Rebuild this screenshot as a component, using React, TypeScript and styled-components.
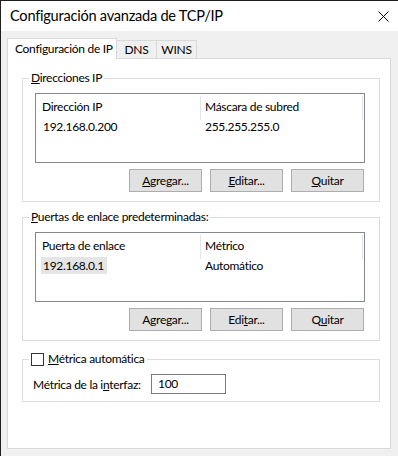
import React from 'react';
import styled, { createGlobalStyle } from 'styled-components';

const GlobalStyle = createGlobalStyle`
    body {
        margin: 0;
        font-family: "Lato", "Liberation Sans", sans-serif;
        color: #000;
    }
    * {
        box-sizing: border-box;
    }
`;

type Column = { title: string, width: number };
type ListData = { columns: Column[], rows: string[][], selected?: boolean };

const ipList: ListData = {
    columns: [
        { title: 'Dirección IP', width: 165 },
        { title: 'Máscara de subred', width: 162 },
    ],
    rows: [['192.168.0.200', '255.255.255.0']],
};

const gatewayList: ListData = {
    columns: [
        { title: 'Puerta de enlace', width: 165 },
        { title: 'Métrico', width: 162 },
    ],
    rows: [['192.168.0.1', 'Automático']],
    selected: true,
};

const ListView = ({ data }: { data: ListData }) => (
    <ListBox>
        <HeaderRow>
            {data.columns.map((col, i) => (
                <HeaderCell key={col.title} $width={col.width} $first={i === 0}>
                    {col.title}
                </HeaderCell>
            ))}
        </HeaderRow>
        {data.rows.map((row) => (
            <Row key={row[0]}>
                {row.map((cell, i) => (
                    <Cell key={cell} $width={data.columns[i].width} $first={i === 0}>
                        {i === 0 ? (
                            <CellText $selected={!!data.selected}>{cell}</CellText>
                        ) : cell}
                    </Cell>
                ))}
            </Row>
        ))}
    </ListBox>
);

const App = () => {
    return (
        <>
            <GlobalStyle />
            <Window>
                <TitleBar>
                    <Title>Configuración avanzada de TCP/IP</Title>
                    <CloseIcon width="11" height="11" viewBox="0 0 11 11">
                        <path d="M0.5 0.5 L10.5 10.5 M10.5 0.5 L0.5 10.5" stroke="#000" strokeWidth="1" fill="none" />
                    </CloseIcon>
                </TitleBar>
                <Body>
                    <TabRow>
                        <Tab $active>Configuración de IP</Tab>
                        <Tab>DNS</Tab>
                        <Tab>WINS</Tab>
                    </TabRow>
                    <Panel>
                        <Group $top={0}>
                            <Legend><u>D</u>irecciones IP</Legend>
                            <GroupContent>
                                <ListView data={ipList} />
                                <ButtonRow>
                                    <Button><u>A</u>gregar...</Button>
                                    <Button><u>E</u>ditar...</Button>
                                    <Button><u>Q</u>uitar</Button>
                                </ButtonRow>
                            </GroupContent>
                        </Group>
                        <Group $top={7}>
                            <Legend><u>P</u>uertas de enlace predeterminadas:</Legend>
                            <GroupContent>
                                <ListView data={gatewayList} />
                                <ButtonRow>
                                    <Button>A<u>g</u>regar...</Button>
                                    <Button>Edi<u>t</u>ar...</Button>
                                    <Button>Q<u>u</u>itar</Button>
                                </ButtonRow>
                            </GroupContent>
                        </Group>
                        <Group $top={10}>
                            <CheckLegend>
                                <CheckBox />
                                <span><u>M</u>étrica automática</span>
                            </CheckLegend>
                            <MetricContent>
                                <FieldLabel>Métrica de la i<u>n</u>terfaz:</FieldLabel>
                                <TextBox>100</TextBox>
                            </MetricContent>
                        </Group>
                    </Panel>
                </Body>
            </Window>
        </>
    );
};

const Window = styled.div`
    width: 398px;
    height: 456px;
    display: flex;
    flex-direction: column;
    background: #f0f0f0;
    border-top: 1px solid #1f1f1f;
    border-left: 1px solid #1f1f1f;
    font-size: 12px;
    letter-spacing: -0.3px;
`;

const TitleBar = styled.div`
    height: 30px;
    flex-shrink: 0;
    display: flex;
    align-items: center;
    justify-content: space-between;
    padding: 0 9px 0 9px;
    background: #fff;
`;

const Title = styled.div`
    font-size: 14.6px;
    line-height: 20px;
    letter-spacing: -0.25px;
`;

const CloseIcon = styled.svg`
    display: block;
`;

const Body = styled.div`
    flex: 1;
    display: flex;
    flex-direction: column;
    padding: 7px 7px 7px 6px;
`;

const TabRow = styled.div`
    height: 21px;
    display: flex;
    align-items: flex-start;
    margin-bottom: -1px;
    position: relative;
    z-index: 1;
`;

const Tab = styled.div<{ $active?: boolean }>`
    height: ${(p) => (p.$active ? '21px' : '18px')};
    margin-top: ${(p) => (p.$active ? '0' : '2px')};
    width: ${(p) => (p.$active ? '110px' : '40px')};
    padding: ${(p) => (p.$active ? '0 0 0 7px' : '0')};
    text-align: ${(p) => (p.$active ? 'left' : 'center')};
    line-height: ${(p) => (p.$active ? '19px' : '17px')};
    background: ${(p) => (p.$active ? '#fff' : '#f0f0f0')};
    border: 1px solid #d9d9d9;
    border-bottom: none;
    border-left: ${(p) => (p.$active ? '1px solid #d9d9d9' : 'none')};
    white-space: nowrap;
`;

const Panel = styled.div`
    flex: 1;
    display: flex;
    flex-direction: column;
    background: #fff;
    border: 1px solid #d9d9d9;
    padding: 11px 10px 0 14px;
`;

const Group = styled.fieldset<{ $top: number }>`
    margin: ${(p) => p.$top}px 0 0 0;
    padding: 0;
    min-width: 0;
    border: 1px solid #dcdcdc;
`;

const Legend = styled.legend`
    margin-left: 6px;
    padding: 0 2px;
    height: 16px;
    line-height: 16px;
`;

const CheckLegend = styled(Legend)`
    display: flex;
    align-items: center;
    gap: 4px;
`;

const GroupContent = styled.div`
    padding: 7px 14px 9px 12px;
    display: flex;
    flex-direction: column;
`;

const ListBox = styled.div`
    height: 70px;
    border: 1px solid #828790;
    background: #fff;
`;

const HeaderRow = styled.div`
    display: flex;
    height: 24px;
`;

const HeaderCell = styled.div<{ $width: number, $first: boolean }>`
    width: ${(p) => p.$width}px;
    padding-left: ${(p) => (p.$first ? '6px' : '4px')};
    border-right: 1px solid #e5e5e5;
    margin-top: 2px;
    line-height: 21px;
    margin-bottom: -2px;
`;

const Row = styled.div`
    display: flex;
    height: 18px;
`;

const Cell = styled.div<{ $width: number, $first: boolean }>`
    width: ${(p) => p.$width}px;
    padding-left: ${(p) => (p.$first ? '5px' : '4px')};
    line-height: 17px;
`;

const CellText = styled.span<{ $selected: boolean }>`
    display: inline-block;
    padding: 0 3px 0 2px;
    background: ${(p) => (p.$selected ? '#e5e5e5' : 'transparent')};
`;

const ButtonRow = styled.div`
    display: flex;
    justify-content: flex-end;
    gap: 8px;
    margin-top: 6px;
    padding-right: 1px;
`;

const Button = styled.div`
    width: 73px;
    height: 23px;
    line-height: 21px;
    text-align: center;
    background: #e1e1e1;
    border: 1px solid #adadad;
`;

const CheckBox = styled.span`
    width: 13px;
    height: 13px;
    border: 1px solid #333;
    background: #fff;
    flex-shrink: 0;
`;

const MetricContent = styled.div`
    display: flex;
    align-items: center;
    padding: 7px 0 7px 10px;
`;

const FieldLabel = styled.div`
    width: 118px;
`;

const TextBox = styled.div`
    width: 75px;
    height: 20px;
    line-height: 18px;
    padding-left: 6px;
    border: 1px solid #7a7a7a;
    background: #fff;
`;

export default App;
